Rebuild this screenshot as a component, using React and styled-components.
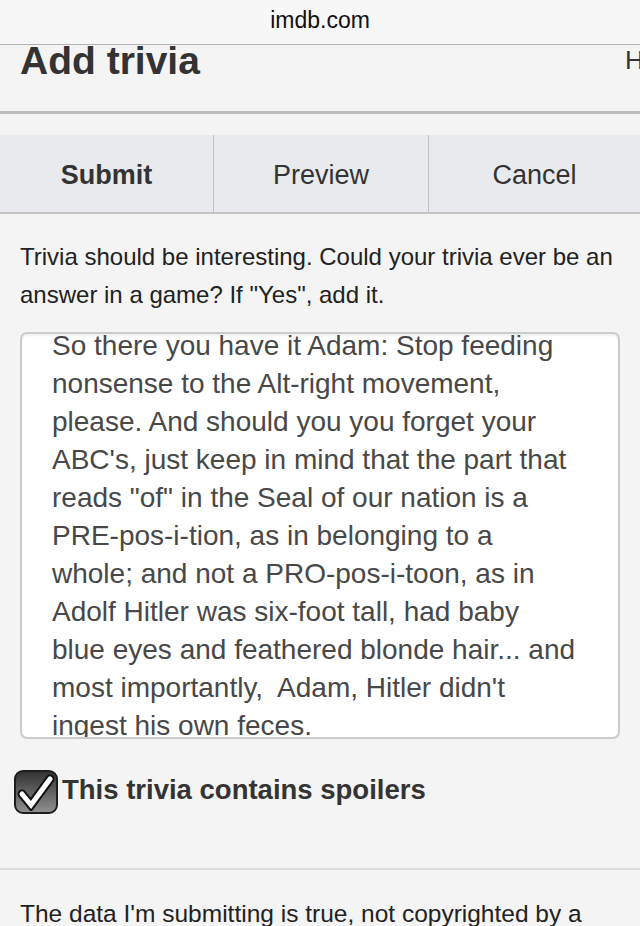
import React from "react";
import styled, { createGlobalStyle } from "styled-components";

const GlobalStyle = createGlobalStyle`
  html, body {
    margin: 0;
    padding: 0;
    background: #f4f4f4;
    font-family: "Liberation Sans", Arial, sans-serif;
    overflow: hidden;
  }
`;

const triviaLines = [
  "So there you have it Adam: Stop feeding",
  "nonsense to the Alt-right movement,",
  "please. And should you you forget your",
  "ABC's, just keep in mind that the part that",
  'reads "of" in the Seal of our nation is a',
  "PRE-pos-i-tion, as in belonging to a",
  "whole; and not a PRO-pos-i-toon, as in",
  "Adolf Hitler was six-foot tall, had baby",
  "blue eyes and feathered blonde hair... and",
  "most importantly,\u00a0 Adam, Hitler didn't",
  "ingest his own feces.",
];

const App = () => {
  return (
    <Page>
      <GlobalStyle />
      <UrlBar>imdb.com</UrlBar>
      <Header>
        <Title>Add trivia</Title>
        <HelpLink>H</HelpLink>
      </Header>
      <ButtonBar>
        <BarButton bold>Submit</BarButton>
        <BarButton>Preview</BarButton>
        <BarButton>Cancel</BarButton>
      </ButtonBar>
      <Hint>
        Trivia should be interesting. Could your trivia ever be an answer in a
        game? If "Yes", add it.
      </Hint>
      <TextBox>
        <TextScroll>
          {triviaLines.map((line, i) => (
            <TextLine key={i}>{line}</TextLine>
          ))}
        </TextScroll>
      </TextBox>
      <SpoilerRow>
        <CheckBox>
          <svg width="38" height="38" viewBox="0 0 38 38">
            <path
              d="M5 21 L14 32 L33 6"
              fill="none"
              stroke="#111"
              strokeWidth="9"
              strokeLinejoin="miter"
              strokeLinecap="round"
            />
            <path
              d="M5 21 L14 32 L33 6"
              fill="none"
              stroke="#fff"
              strokeWidth="5"
              strokeLinejoin="miter"
              strokeLinecap="round"
            />
          </svg>
        </CheckBox>
        <SpoilerLabel>This trivia contains spoilers</SpoilerLabel>
      </SpoilerRow>
      <Divider />
      <Disclaimer>The data I'm submitting is true, not copyrighted by a</Disclaimer>
    </Page>
  );
};

const Page = styled.div`
  width: 640px;
  height: 926px;
  overflow: hidden;
  background: #f4f4f4;
`;

const UrlBar = styled.div`
  height: 45px;
  border-bottom: 1px solid #b3b3b3;
  background: #f7f7f7;
  display: flex;
  align-items: center;
  justify-content: center;
  font-size: 23px;
  color: #111;
  padding-bottom: 4px;
  box-sizing: border-box;
`;

const Header = styled.div`
  height: 66px;
  border-bottom: 3px solid #bdbdbd;
  display: flex;
  justify-content: space-between;
  align-items: flex-start;
  padding: 0 0 0 20px;
`;

const Title = styled.h1`
  margin: 0;
  font-size: 39px;
  font-weight: bold;
  color: #333;
  line-height: 32px;
`;

const HelpLink = styled.span`
  font-size: 26px;
  color: #333;
  margin: 2px -3px 0 0;
  line-height: 26px;
  width: 18px;
  overflow: hidden;
`;

const ButtonBar = styled.div`
  margin-top: 21px;
  display: grid;
  grid-template-columns: 213px 215px 1fr;
  background: #e8eaed;
  border-bottom: 2px solid #c4c4c4;
  height: 77px;
`;

const BarButton = styled.div`
  display: flex;
  align-items: center;
  justify-content: center;
  font-size: 27px;
  padding-top: 4px;
  color: #333;
  font-weight: ${(p) => (p.bold ? "bold" : "normal")};
  border-left: 1px solid #c2c2c2;
  &:first-child {
    border-left: none;
  }
`;

const Hint = styled.p`
  margin: 24px 20px 0;
  font-size: 24px;
  line-height: 38px;
  color: #222;
`;

const TextBox = styled.div`
  margin: 18px 20px 0;
  height: 407px;
  box-sizing: border-box;
  border: 2px solid #cbcbcb;
  border-radius: 7px;
  background: #fff;
  overflow: hidden;
  box-shadow: inset 0 2px 2px rgba(0, 0, 0, 0.06);
`;

const TextScroll = styled.div`
  margin-top: -7px;
  padding: 0 10px 0 30px;
`;

const TextLine = styled.div`
  font-size: 28px;
  line-height: 38px;
  color: #484848;
  white-space: nowrap;
`;

const SpoilerRow = styled.div`
  margin: 31px 0 0 14px;
  display: flex;
  align-items: center;
  gap: 4px;
`;

const CheckBox = styled.div`
  width: 44px;
  height: 44px;
  box-sizing: border-box;
  border: 2px solid #1e1e1e;
  border-radius: 9px;
  background: linear-gradient(#333, #8f8f8f);
  display: flex;
  align-items: center;
  justify-content: center;
`;

const SpoilerLabel = styled.span`
  font-size: 27.5px;
  font-weight: bold;
  color: #333;
  margin-top: -4px;
`;

const Divider = styled.div`
  margin-top: 54px;
  height: 2px;
  background: #dedede;
`;

const Disclaimer = styled.p`
  margin: 30px 20px 0;
  font-size: 24.5px;
  line-height: 28px;
  color: #222;
  white-space: nowrap;
`;

export default App;
